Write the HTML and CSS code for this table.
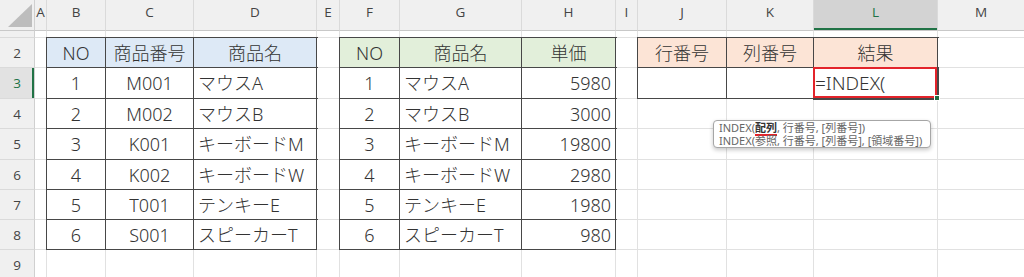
FILE: index.html
```html
<!DOCTYPE html>
<html lang="ja">
<head>
    <meta charset="UTF-8">
    <title>商品マスタ - INDEX</title>
    <link rel="stylesheet" href="styles.css">
</head>
<body>
    <div class="sheet">
        <!-- column headers -->
        <div class="corner">
            <svg width="34" height="30" viewBox="0 0 34 30"><polygon points="8,27 32,27 32,4" fill="#bdbdbd"/></svg>
        </div>
        <div class="ch">A</div>
        <div class="ch">B</div>
        <div class="ch">C</div>
        <div class="ch">D</div>
        <div class="ch">E</div>
        <div class="ch">F</div>
        <div class="ch">G</div>
        <div class="ch">H</div>
        <div class="ch">I</div>
        <div class="ch">J</div>
        <div class="ch">K</div>
        <div class="ch on">L</div>
        <div class="ch">M</div>

        <!-- row 1 -->
        <div class="rh"></div>
        <div class="c"></div><div class="c"></div><div class="c"></div><div class="c"></div>
        <div class="c"></div><div class="c"></div><div class="c"></div><div class="c"></div>
        <div class="c"></div><div class="c"></div><div class="c"></div><div class="c"></div>
        <div class="c"></div>

        <!-- row 2 -->
        <div class="rh">2</div>
        <div class="c"></div>
        <div class="c t blue ctr">NO</div>
        <div class="c t blue ctr">商品番号</div>
        <div class="c t blue ctr">商品名</div>
        <div class="c"></div>
        <div class="c t green ctr">NO</div>
        <div class="c t green ctr">商品名</div>
        <div class="c t green ctr">単価</div>
        <div class="c"></div>
        <div class="c t peach ctr">行番号</div>
        <div class="c t peach ctr">列番号</div>
        <div class="c t peach ctr">結果</div>
        <div class="c"></div>

        <!-- row 3 -->
        <div class="rh on">3</div>
        <div class="c"></div>
        <div class="c t ctr">1</div>
        <div class="c t ctr">M001</div>
        <div class="c t lft">マウスA</div>
        <div class="c"></div>
        <div class="c t ctr">1</div>
        <div class="c t lft">マウスA</div>
        <div class="c t rgt">5980</div>
        <div class="c"></div>
        <div class="c t"></div>
        <div class="c t"></div>
        <div class="c t sel">=INDEX(</div>
        <div class="c"></div>

        <!-- row 4 -->
        <div class="rh">4</div>
        <div class="c"></div>
        <div class="c t ctr">2</div>
        <div class="c t ctr">M002</div>
        <div class="c t lft">マウスB</div>
        <div class="c"></div>
        <div class="c t ctr">2</div>
        <div class="c t lft">マウスB</div>
        <div class="c t rgt">3000</div>
        <div class="c"></div><div class="c"></div><div class="c"></div><div class="c"></div><div class="c"></div>

        <!-- row 5 -->
        <div class="rh">5</div>
        <div class="c"></div>
        <div class="c t ctr">3</div>
        <div class="c t ctr">K001</div>
        <div class="c t lft">キーボードM</div>
        <div class="c"></div>
        <div class="c t ctr">3</div>
        <div class="c t lft">キーボードM</div>
        <div class="c t rgt">19800</div>
        <div class="c"></div><div class="c"></div><div class="c"></div><div class="c"></div><div class="c"></div>

        <!-- row 6 -->
        <div class="rh">6</div>
        <div class="c"></div>
        <div class="c t ctr">4</div>
        <div class="c t ctr">K002</div>
        <div class="c t lft">キーボードW</div>
        <div class="c"></div>
        <div class="c t ctr">4</div>
        <div class="c t lft">キーボードW</div>
        <div class="c t rgt">2980</div>
        <div class="c"></div><div class="c"></div><div class="c"></div><div class="c"></div><div class="c"></div>

        <!-- row 7 -->
        <div class="rh">7</div>
        <div class="c"></div>
        <div class="c t ctr">5</div>
        <div class="c t ctr">T001</div>
        <div class="c t lft">テンキーE</div>
        <div class="c"></div>
        <div class="c t ctr">5</div>
        <div class="c t lft">テンキーE</div>
        <div class="c t rgt">1980</div>
        <div class="c"></div><div class="c"></div><div class="c"></div><div class="c"></div><div class="c"></div>

        <!-- row 8 -->
        <div class="rh">8</div>
        <div class="c"></div>
        <div class="c t ctr">6</div>
        <div class="c t ctr">S001</div>
        <div class="c t lft">スピーカーT</div>
        <div class="c"></div>
        <div class="c t ctr">6</div>
        <div class="c t lft">スピーカーT</div>
        <div class="c t rgt">980</div>
        <div class="c"></div><div class="c"></div><div class="c"></div><div class="c"></div><div class="c"></div>

        <!-- row 9 -->
        <div class="rh">9</div>
        <div class="c"></div><div class="c"></div><div class="c"></div><div class="c"></div>
        <div class="c"></div><div class="c"></div><div class="c"></div><div class="c"></div>
        <div class="c"></div><div class="c"></div><div class="c"></div><div class="c"></div>
        <div class="c"></div>

        <!-- function argument hint -->
        <div class="tip">
            <div>INDEX(<b class="arg">配列</b>, 行番号, [列番号])</div>
            <div>INDEX(参照, 行番号, [列番号], [領域番号])</div>
        </div>
    </div>
</body>
</html>
```

FILE: styles.css
```css
body {
    margin: 0;
    background: #fff;
    overflow: hidden;
}

.sheet {
    position: relative;
    display: grid;
    grid-template-columns: 35px 12px 59px 88px 123px 23px 60px 122px 94px 22px 89px 87px 124px 87px;
    grid-template-rows: 31px 7px 30px 31px 30px 31px 30px 30px 30px 30px;
}

/* headers */
.corner,
.ch,
.rh {
    box-sizing: border-box;
    background: #f0f0f0;
    font-family: "Open Sans", "Noto Sans", sans-serif;
    font-size: 13.5px;
    line-height: 18px;
    color: #444;
    display: flex;
    justify-content: center;
}

.corner {
    border-right: 1px solid #d0d0d0;
    border-bottom: 1px solid #c8c8c8;
}

.corner svg {
    display: block;
}

.ch {
    align-items: flex-start;
    padding-top: 3px;
    border-right: 1px solid #dadada;
    border-bottom: 1px solid #c8c8c8;
}

.rh {
    align-items: center;
    border-right: 1px solid #d0d0d0;
    border-bottom: 1px solid #dadada;
}

.ch.on {
    background: #d3d3d3;
    color: #217346;
    box-shadow: inset 0 -2px 0 #217346;
}

.rh.on {
    background: #e2e2e2;
    color: #217346;
    box-shadow: inset -2px 0 0 #217346;
}

/* cells */
.c {
    box-sizing: border-box;
    background: #fff;
    border-right: 1px solid #e1e1e1;
    border-bottom: 1px solid #e1e1e1;
    display: flex;
    align-items: center;
    font-family: "Noto Sans", "Noto Sans CJK JP", sans-serif;
    font-size: 18px;
    font-weight: 300;
    line-height: 24px;
    color: #333;
    white-space: nowrap;
}

.t {
    border-color: #474747;
    box-shadow: 0 0 0 1px #474747;
}

.blue { background: #dde9f6; }
.green { background: #e2efda; }
.peach { background: #fce4d6; }

.ctr { justify-content: center; }
.lft { padding-left: 4px; }
.rgt { justify-content: flex-end; padding-right: 4px; }

.sel {
    position: relative;
    z-index: 1;
    padding-left: 1px;
    font-size: 19px;
}

.sel::before {
    content: "";
    position: absolute;
    top: -1px;
    left: -1px;
    right: 0;
    bottom: 0;
    border: 2px solid #e3242b;
}

.sel::after {
    content: "";
    position: absolute;
    right: -3px;
    bottom: -3px;
    width: 4px;
    height: 4px;
    background: #1e6b41;
    border: 1px solid #fff;
}

/* argument hint */
.tip {
    position: absolute;
    left: 713px;
    top: 120px;
    z-index: 2;
    box-sizing: border-box;
    width: 218px;
    padding: 0 5px;
    background: #fff;
    border: 1px solid #a6a6a6;
    border-radius: 4px;
    box-shadow: 0 2px 4px rgba(0, 0, 0, 0.22);
    font-family: "Noto Sans", "Noto Sans CJK JP", sans-serif;
    font-size: 11px;
    line-height: 13px;
    color: #666;
    white-space: nowrap;
}

.arg {
    color: #333;
    text-decoration: underline;
    text-decoration-color: #e3242b;
    text-decoration-thickness: 2px;
    text-underline-offset: 2px;
}
```
